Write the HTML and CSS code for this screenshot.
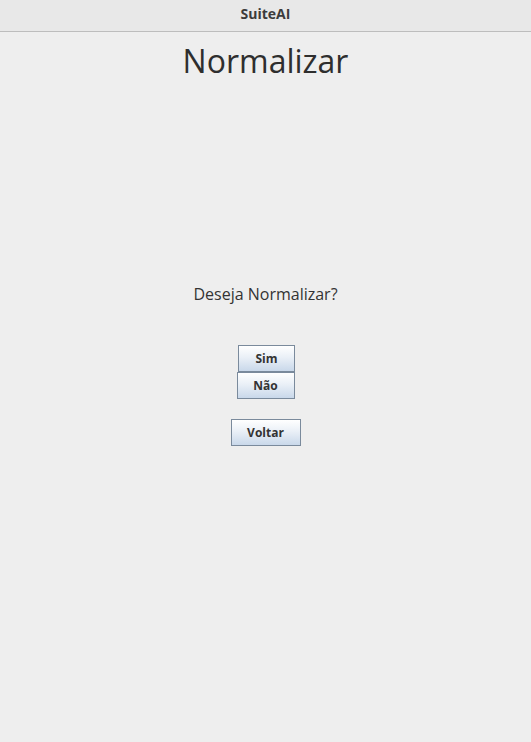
FILE: index.html
```html
<!DOCTYPE html>
<html lang="pt">
<head>
<meta charset="utf-8">
<title>SuiteAI</title>
<link rel="stylesheet" href="styles.css">
</head>
<body>
<div class="window">
  <header class="titlebar">SuiteAI</header>
  <main class="content">
    <h1 class="heading">Normalizar</h1>
    <p class="question">Deseja Normalizar?</p>
    <div class="choices">
      <button class="btn btn-sim">Sim</button>
      <button class="btn btn-nao">Não</button>
    </div>
    <button class="btn btn-voltar">Voltar</button>
  </main>
</div>
</body>
</html>
```
FILE: styles.css
```css
html, body {
  margin: 0;
  padding: 0;
  background: #eeeeee;
}
.window {
  width: 531px;
  height: 742px;
  display: flex;
  flex-direction: column;
  font-family: "Open Sans", "Noto Sans", sans-serif;
}
.titlebar {
  height: 32px;
  box-sizing: border-box;
  border-bottom: 1px solid #bdbdbd;
  background: #e8e8e8;
  color: #3c3c3c;
  font-weight: bold;
  font-size: 14px;
  display: flex;
  align-items: center;
  justify-content: center;
  padding-bottom: 5px;
}
.content {
  display: flex;
  flex-direction: column;
  align-items: center;
}
.heading {
  margin: 7px 0 0 0;
  font-weight: normal;
  font-size: 32px;
  line-height: 44px;
  color: #2e2e2e;
}
.question {
  margin: 200px 0 0 0;
  font-size: 16px;
  line-height: 22px;
  color: #333333;
}
.choices {
  margin-top: 40px;
  display: flex;
  flex-direction: column;
  align-items: center;
}
.btn {
  font-family: "Open Sans", "Noto Sans", sans-serif;
  font-weight: bold;
  font-size: 12px;
  color: #333333;
  border: 1px solid #7a8a9c;
  background: linear-gradient(to bottom, #ffffff 0%, #eaf0f7 45%, #c9d8ea 100%);
  padding: 0;
  margin: 0;
  height: 27px;
  box-sizing: border-box;
}
.btn-sim {
  width: 57px;
  margin-left: 2px;
}
.btn-nao {
  width: 58px;
}
.btn-voltar {
  width: 70px;
  margin-top: 20px;
  height: 27px;
}
```
